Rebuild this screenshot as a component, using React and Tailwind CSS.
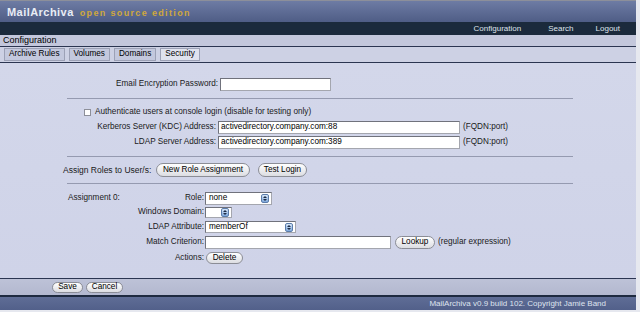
import React from 'react';

// Old-school MailArchiva config screen, security tab.

const font = "font-['Liberation_Sans',Arial,sans-serif]";

function PillButton({ children, className = '' }) {
  return (
    <div
      className={`flex items-center justify-center rounded-full border border-[#8b8d96] bg-gradient-to-b from-[#ffffff] to-[#dcdde2] text-[8.2px] leading-none text-black ${className}`}
    >
      {children}
    </div>
  );
}

function TextBox({ value = '', className = '' }) {
  return (
    <div
      className={`flex items-center bg-white border border-[#a4a6ae] border-t-[#70727c] border-l-[#70727c] px-[2px] text-[8.2px] leading-none text-black overflow-hidden whitespace-nowrap ${className}`}
    >
      {value}
    </div>
  );
}

function Spinner() {
  return (
    <div className="flex flex-col items-center justify-center gap-[1px] w-[8px] h-[9px] rounded-[2px] border border-[#5b7cab] bg-gradient-to-b from-[#d6e6f8] to-[#7fa8db]">
      <svg width="4" height="2" viewBox="0 0 4 2"><path d="M0 2 L2 0 L4 2 Z" fill="#1d2b44" /></svg>
      <svg width="4" height="2" viewBox="0 0 4 2"><path d="M0 0 L2 2 L4 0 Z" fill="#1d2b44" /></svg>
    </div>
  );
}

function SelectBox({ value = '', className = '' }) {
  return (
    <div
      className={`flex items-center justify-between bg-white border border-[#a4a6ae] border-t-[#70727c] border-l-[#70727c] pl-[3px] pr-[2px] text-[8.2px] leading-none text-black ${className}`}
    >
      <span>{value}</span>
      <Spinner />
    </div>
  );
}

function Rule({ mt }) {
  return <div className={`ml-[67px] w-[506px] h-px bg-[#959ab0] ${mt}`} />;
}

function Label({ children, w }) {
  return <div className={`${w} text-right text-[8.2px] leading-none text-[#1a1a1a] whitespace-nowrap`}>{children}</div>;
}

export default function App() {
  const tabs = ['Archive Rules', 'Volumes', 'Domains', 'Security'];

  return (
    <div className={`w-[640px] h-[312px] bg-[#e6e8ef] flex ${font}`}>
      <div className="w-[636px] h-[310px] flex flex-col">
        {/* header */}
        <div className="h-[22px] shrink-0 bg-gradient-to-b from-[#6e7ca4] to-[#4f5d86] border-t border-[#8c8f9a] flex items-end pb-[4px] pl-[7px]">
          <span className="text-[11px] font-bold tracking-[0.45px] text-[#e9edf5] leading-none">MailArchiva</span>
          <span className="ml-[6px] text-[9px] font-bold tracking-[1.35px] text-[#d0a83c] leading-none">open source edition</span>
        </div>

        {/* nav */}
        <div className="h-[13px] shrink-0 bg-[#1b2a3c] flex items-center justify-end pr-[16px] text-[8px] text-[#dfe4ec] leading-none">
          <span>Configuration</span>
          <span className="ml-[27px]">Search</span>
          <span className="ml-[22px]">Logout</span>
        </div>

        {/* title */}
        <div className="h-[11px] shrink-0 bg-[#c3c7dc] flex items-center pl-[3px] text-[9px] leading-none text-black">
          Configuration
        </div>
        <div className="h-px shrink-0 bg-[#2b3551]" />

        {/* tabs */}
        <div className="h-[15px] shrink-0 bg-[#cdd1e4] flex items-start pt-[1px] pl-[4px] gap-[4px]">
          {tabs.map((t) => (
            <div
              key={t}
              className={`h-[13px] px-[4px] flex items-center border border-[#9ca1b6] text-[8.2px] leading-none text-black ${
                t === 'Security' ? 'bg-[#dfe2ee]' : 'bg-[#c3c8dd]'
              }`}
            >
              {t}
            </div>
          ))}
        </div>
        <div className="h-px shrink-0 bg-[#2b3551]" />

        {/* content */}
        <div className="flex-1 bg-gradient-to-b from-[#d3d7ea] to-[#cfd3e8] flex flex-col">
          <div className="mt-[15px] flex items-center h-[13px]">
            <Label w="w-[218px]">Email Encryption Password:</Label>
            <TextBox className="ml-[2px] w-[111px] h-[13px]" />
          </div>

          <Rule mt="mt-[7px]" />

          <div className="mt-[7px] h-[12px] flex items-center pl-[84px]">
            <div className="w-[7px] h-[7px] bg-white border border-[#8d8f99]" />
            <span className="ml-[4px] text-[8.2px] leading-none text-[#1a1a1a]">
              Authenticate users at console login (disable for testing only)
            </span>
          </div>

          <div className="mt-[3px] h-[13px] flex items-center">
            <Label w="w-[216px]">Kerberos Server (KDC) Address:</Label>
            <TextBox className="ml-[2px] w-[242px] h-[13px]" value="activedirectory.company.com:88" />
            <span className="ml-[3px] text-[8.2px] leading-none text-[#1a1a1a]">(FQDN:port)</span>
          </div>
          <div className="mt-[2px] h-[13px] flex items-center">
            <Label w="w-[216px]">LDAP Server Address:</Label>
            <TextBox className="ml-[2px] w-[242px] h-[13px]" value="activedirectory.company.com:389" />
            <span className="ml-[3px] text-[8.2px] leading-none text-[#1a1a1a]">(FQDN:port)</span>
          </div>

          <Rule mt="mt-[7px]" />

          <div className="mt-[6px] h-[14px] flex items-center pl-[63px]">
            <span className="w-[93px] text-[8.5px] leading-none text-[#1a1a1a]">Assign Roles to User/s:</span>
            <PillButton className="w-[94px] h-[14px]">New Role Assignment</PillButton>
            <PillButton className="ml-[8px] w-[49px] h-[14px]">Test Login</PillButton>
          </div>

          <Rule mt="mt-[6px]" />

          <div className="mt-[8px] h-[13px] flex items-center">
            <div className="w-[204px] pl-[68px] flex justify-between text-[8.2px] leading-none text-[#1a1a1a]">
              <span>Assignment 0:</span>
              <span>Role:</span>
            </div>
            <SelectBox className="ml-[1px] w-[67px] h-[13px]" value="none" />
          </div>
          <div className="mt-[2px] h-[11px] flex items-center">
            <Label w="w-[204px]">Windows Domain:</Label>
            <SelectBox className="ml-[1px] w-[27px] h-[11px]" />
          </div>
          <div className="mt-[3px] h-[12px] flex items-center">
            <Label w="w-[204px]">LDAP Attribute:</Label>
            <SelectBox className="ml-[1px] w-[91px] h-[12px]" value="memberOf" />
          </div>
          <div className="mt-[3px] h-[13px] flex items-center">
            <Label w="w-[204px]">Match Criterion:</Label>
            <TextBox className="ml-[1px] w-[186px] h-[13px]" />
            <PillButton className="ml-[4px] w-[40px] h-[13px]">Lookup</PillButton>
            <span className="ml-[3px] text-[8.2px] leading-none text-[#1a1a1a]">(regular expression)</span>
          </div>
          <div className="mt-[3px] h-[12px] flex items-center">
            <Label w="w-[204px]">Actions:</Label>
            <PillButton className="ml-[2px] w-[37px] h-[12px]">Delete</PillButton>
          </div>
        </div>

        <div className="h-px shrink-0 bg-[#2b3551]" />
        {/* button bar */}
        <div className="h-[16px] shrink-0 bg-gradient-to-b from-[#bdc2d7] to-[#b3b8cf] flex items-center pl-[52px] gap-[3px]">
          <PillButton className="w-[31px] h-[11px]">Save</PillButton>
          <PillButton className="w-[37px] h-[11px]">Cancel</PillButton>
        </div>
        <div className="h-[2px] shrink-0 bg-[#1e2a40]" />

        {/* footer */}
        <div className="h-[13px] shrink-0 bg-gradient-to-b from-[#5f6d96] to-[#52608a] flex items-center justify-end pr-[30px] text-[8px] leading-none text-[#dfe3ee]">
          MailArchiva v0.9 build 102. Copyright Jamie Band
        </div>
      </div>
    </div>
  );
}
